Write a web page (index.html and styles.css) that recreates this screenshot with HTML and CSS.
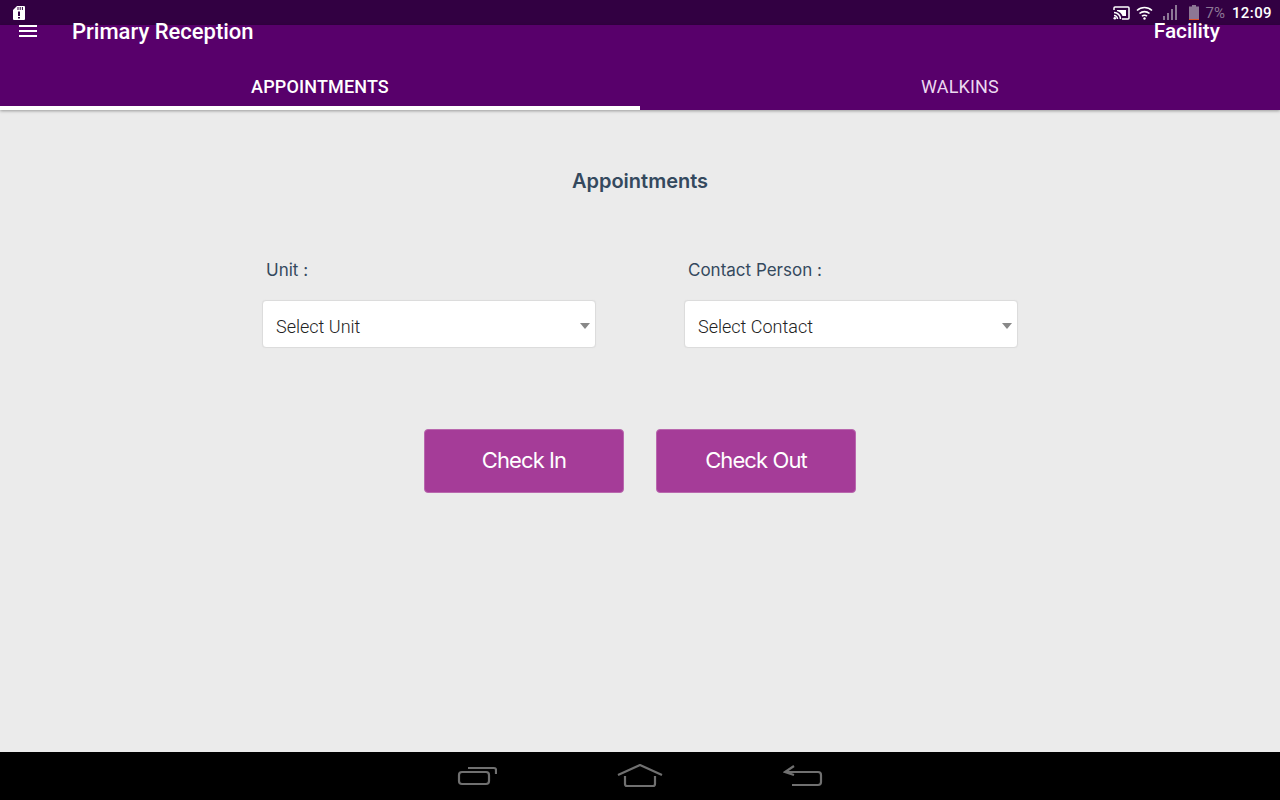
FILE: index.html
```html
<!DOCTYPE html>
<html lang="en">
<head>
    <meta charset="UTF-8">
    <meta name="viewport" content="width=device-width, initial-scale=1.0">
    <title>Primary Reception</title>
    <link rel="stylesheet" href="styles.css">
</head>
<body>

    <div id="app">
        <div class="status-bar">
            <svg class="sd-icon" width="12" height="14" viewBox="0 0 12 14">
                <path d="M4 0H11a1 1 0 0 1 1 1V13a1 1 0 0 1-1 1H1a1 1 0 0 1-1-1V4Z" fill="#fff"/>
                <path d="M5 1V4M7.2 1V4M9.4 1V4" stroke="#320042" stroke-width="1"/>
                <path d="M6 5.5V10M6 11V12.5" stroke="#320042" stroke-width="2"/>
            </svg>
            <div class="status-right">
                <svg width="17" height="14" viewBox="0 0 17 14" fill="none">
                    <path d="M1 4V2a1 1 0 0 1 1-1H15a1 1 0 0 1 1 1V12a1 1 0 0 1-1 1H9" stroke="#fff" stroke-width="1.5"/>
                    <path d="M1 6.5a6.5 6.5 0 0 1 6.5 6.5M1 9.5A3.5 3.5 0 0 1 4.500 13" stroke="#fff" stroke-width="1.5"/>
                    <circle cx="1.800" cy="12.200" r="1.300" fill="#fff"/>
                    <path d="M4 4H13V10H9.500A8 8 0 0 0 4 5Z" fill="#fff"/>
                </svg>
                <svg class="wifi" width="17" height="14" viewBox="0 0 17 14" fill="none" stroke="#fff" stroke-width="1.600">
                    <path d="M1 4.500a11 11 0 0 1 15 0"/>
                    <path d="M3.500 7.500a7.500 7.500 0 0 1 10 0"/>
                    <path d="M6 10.300a3.500 3.500 0 0 1 5 0"/>
                    <circle cx="8.500" cy="12.500" r="1.200" fill="#fff" stroke="none"/>
                </svg>
                <svg class="signal" width="15" height="15" viewBox="0 0 15 15" fill="#8d7795">
                    <rect x="0" y="11" width="2" height="4"/>
                    <rect x="4" y="8" width="2" height="7"/>
                    <rect x="8" y="4" width="2" height="11"/>
                    <rect x="12" y="0" width="2" height="15"/>
                </svg>
                <svg class="battery" width="10" height="15" viewBox="0 0 10 15">
                    <path d="M3 0H7V1.500H10V15H0V1.500H3Z" fill="#8d7795"/>
                    <rect x="0" y="14" width="10" height="1" fill="#e2552d"/>
                </svg>
                <span class="battery-text">7%</span>
                <span class="clock">12:09</span>
            </div>
        </div>

        <div class="header">
            <div class="toolbar">
                <div class="menu-icon"><span></span><span></span><span></span></div>
                <div class="app-title">Primary Reception</div>
                <div class="facility">Facility</div>
            </div>
            <div class="tabs">
                <div class="tab active">APPOINTMENTS</div>
                <div class="tab">WALKINS</div>
            </div>
        </div>

        <div class="content">
            <h1 class="page-title">Appointments</h1>
            <div class="form-row">
                <div class="field">
                    <label class="field-label">Unit :</label>
                    <div class="select-box">
                        <span>Select Unit</span>
                        <i class="caret"></i>
                    </div>
                </div>
                <div class="field">
                    <label class="field-label">Contact Person :</label>
                    <div class="select-box">
                        <span>Select Contact</span>
                        <i class="caret"></i>
                    </div>
                </div>
            </div>
            <div class="actions">
                <button class="action-btn">Check In</button>
                <button class="action-btn">Check Out</button>
            </div>
        </div>

        <div class="nav-bar">
            <svg width="44" height="22" viewBox="0 0 44 22" fill="none" stroke="#707070" stroke-width="2.200">
                <rect x="6" y="7" width="30" height="12" rx="3"/>
                <path d="M15 3H41a2 2 0 0 1 2 2V9"/>
            </svg>
            <svg width="46" height="24" viewBox="0 0 46 24" fill="none" stroke="#707070" stroke-width="2.200">
                <path d="M1 11L23 1L45 11"/>
                <path d="M8 12V20a2 2 0 0 0 2 2H36a2 2 0 0 0 2-2V12"/>
            </svg>
            <svg width="40" height="22" viewBox="0 0 40 22" fill="none" stroke="#707070" stroke-width="2.200">
                <path d="M11 1L2 7L11 10"/>
                <path d="M2 7H35a3 3 0 0 1 3 3V17a3 3 0 0 1-3 3H9"/>
            </svg>
        </div>
    </div>

</body>
</html>
```

FILE: styles.css
```css
* {
    margin: 0;
    padding: 0;
    box-sizing: border-box;
}
body {
    font-family: Roboto, Arial, sans-serif;
    background-color: #ebebeb;
}
#app {
    width: 1280px;
    height: 800px;
    display: flex;
    flex-direction: column;
    overflow: hidden;
}
.status-bar {
    height: 25px;
    background: #320042;
    display: flex;
    justify-content: space-between;
    align-items: center;
    padding: 0 8px 0 13px;
}
.status-right {
    display: flex;
    align-items: center;
}
.wifi {
    margin-left: 6px;
}
.signal {
    margin-left: 10px;
}
.battery {
    margin-left: 11px;
}
.battery-text {
    margin-left: 7px;
    font-size: 15px;
    color: #8d7795;
}
.clock {
    margin-left: 7px;
    font-size: 15px;
    font-weight: 500;
    color: #fff;
    letter-spacing: 0.4px;
}
.header {
    background: #58006b;
    height: 85px;
    display: flex;
    flex-direction: column;
    box-shadow: 0 1px 3px rgba(0, 0, 0, 0.35);
}
.toolbar {
    height: 39px;
    display: flex;
    align-items: flex-start;
    color: #fff;
}
.menu-icon {
    width: 18px;
    margin-left: 19px;
    display: flex;
    flex-direction: column;
    gap: 3px;
}
.menu-icon span {
    height: 2px;
    background: #fff;
}
.app-title {
    margin-left: 35px;
    margin-top: -4px;
    font-size: 22px;
    font-weight: 500;
    line-height: 22px;
}
.facility {
    margin-left: auto;
    margin-right: 60px;
    margin-top: -5px;
    font-size: 20.8px;
    font-weight: 500;
    line-height: 22px;
}
.tabs {
    height: 46px;
    display: flex;
}
.tab {
    flex: 1;
    height: 46px;
    text-align: center;
    font-size: 18px;
    letter-spacing: 0.15px;
    line-height: 46px;
    color: #ecd9f0;
}
.tab.active {
    font-weight: 500;
    color: #fff;
    border-bottom: 4px solid #fff;
}
.content {
    flex: 1;
    padding-top: 59px;
    display: flex;
    flex-direction: column;
    align-items: center;
}
.page-title {
    font-family: Inter, Roboto, sans-serif;
    font-size: 20px;
    font-weight: 600;
    line-height: 24px;
    color: #34495e;
}
.form-row {
    margin-top: 67px;
    display: flex;
    gap: 88px;
}
.field {
    width: 334px;
}
.field-label {
    display: block;
    padding-left: 4px;
    font-family: Inter, Roboto, sans-serif;
    font-size: 17px;
    line-height: 20px;
    color: #34495e;
}
.select-box {
    margin-top: 20px;
    height: 48px;
    background: #fff;
    border: 1px solid #dcdcdc;
    border-radius: 4px;
    box-shadow: 0 0 1px #dcdcdc;
    display: flex;
    justify-content: space-between;
    align-items: center;
    padding: 4px 5px 0 13px;
    font-size: 18px;
    font-weight: 300;
    color: #222;
}
.caret {
    width: 0;
    height: 0;
    border-left: 5px solid transparent;
    border-right: 5px solid transparent;
    border-top: 6px solid #888;
}
.actions {
    margin-top: 81px;
    display: flex;
    gap: 32px;
}
.action-btn {
    width: 200px;
    height: 64px;
    padding-bottom: 2px;
    background: #a53c98;
    border: 1px solid #b968ae;
    border-radius: 4px;
    color: #fff;
    font-family: Inter, Roboto, sans-serif;
    font-size: 22px;
    letter-spacing: -0.9px;
}
.nav-bar {
    height: 48px;
    background: #000;
    display: flex;
    justify-content: center;
    align-items: center;
    padding-right: 4px;
    gap: 120px;
}
```
